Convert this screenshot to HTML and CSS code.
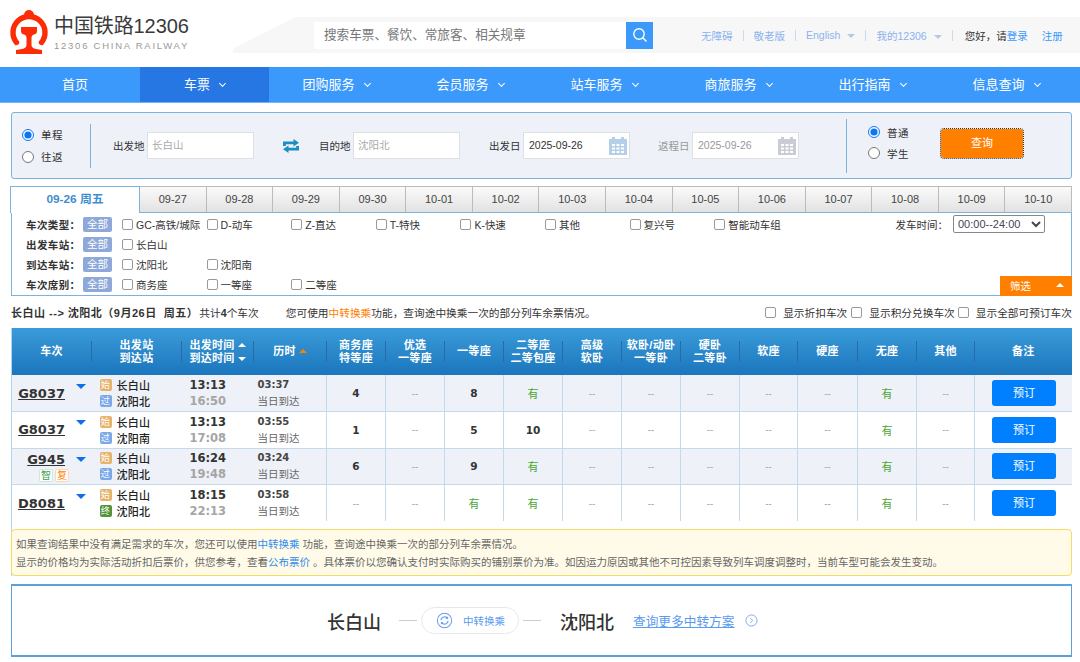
FILE: index.html
```html
<!DOCTYPE html>
<html lang="zh-CN">
<head>
    <meta charset="UTF-8">
    <meta name="viewport" content="width=device-width, initial-scale=1.0">
    <title>中国铁路12306</title>
    <link rel="stylesheet" href="styles.css">
</head>
<body>
    <header class="header">
        <div class="logo">
            <svg class="logo-mark" viewBox="0 0 40 46" width="40" height="46">
                <path d="M7.5 33.5A16 16 0 1 1 32.5 33.5" fill="none" stroke="#fb2c06" stroke-width="5.4" stroke-linecap="round"/>
                <path d="M15 6A5 5 0 0 1 25 6Z" fill="#fb2c06"/>
                <path d="M12 18H28V22Q28 25 25 25.5Q22.5 26 22.5 29V36Q22.5 39 27 40L33 41V45H7V41L13 40Q17.5 39 17.5 36V29Q17.5 26 15 25.5Q12 25 12 22Z" fill="#fb2c06"/>
            </svg>
            <div class="logo-text">
                <div class="logo-title">中国铁路12306</div>
                <div class="logo-sub">12306 CHINA RAILWAY</div>
            </div>
        </div>
        <div class="head-band">
            <div class="search">
                <div class="search-input">搜索车票、餐饮、常旅客、相关规章</div>
                <div class="search-btn">
                    <svg viewBox="0 0 16 16" width="16" height="16"><circle cx="7" cy="7" r="5.2" fill="none" stroke="#fff" stroke-width="1.4"/><path d="M10.8 10.8L14.5 14.5" stroke="#fff" stroke-width="1.5"/></svg>
                </div>
            </div>
            <div class="head-links">
                <a>无障碍</a><i class="sep"></i>
                <a>敬老版</a><i class="sep"></i>
                <a>English<b class="tri"></b></a><i class="sep"></i>
                <a>我的12306<b class="tri"></b></a><i class="sep"></i>
                <span class="hello">您好，请<a>登录</a></span>
                <a class="reg">注册</a>
            </div>
        </div>
    </header>

    <nav class="nav">
        <a class="nav-item nav-first">首页</a>
        <a class="nav-item active">车票<i class="chev"></i></a>
        <a class="nav-item">团购服务<i class="chev"></i></a>
        <a class="nav-item">会员服务<i class="chev"></i></a>
        <a class="nav-item">站车服务<i class="chev"></i></a>
        <a class="nav-item">商旅服务<i class="chev"></i></a>
        <a class="nav-item">出行指南<i class="chev"></i></a>
        <a class="nav-item">信息查询<i class="chev"></i></a>
    </nav>

    <main class="wrap">
        <section class="query">
            <div class="trip-type">
                <label class="radio"><input type="radio" name="trip" checked>单程</label>
                <label class="radio"><input type="radio" name="trip">往返</label>
            </div>
            <div class="field from-field">
                <span class="field-label">出发地</span>
                <div class="text-box">长白山</div>
            </div>
            <svg class="swap" viewBox="0 0 16 14" width="16" height="14">
                <path d="M0 7V2.5H10.5V0L16 3.8L10.5 7.5V5.2H2.8V7Z" fill="#1b8fc4"/>
                <path d="M16 7V11.5H5.5V14L0 10.2L5.5 6.5V8.8H13.2V7Z" fill="#1b8fc4"/>
            </svg>
            <div class="field to-field">
                <span class="field-label">目的地</span>
                <div class="text-box">沈阳北</div>
            </div>
            <div class="field date-field">
                <span class="field-label">出发日</span>
                <div class="text-box date-box">2025-09-26
                    <svg class="cal" viewBox="0 0 18 19" width="18" height="19"><path d="M0 3H3V1H6V3H12V1H15V3H18V19H0Z" fill="#b5cfe8"/><path d="M3 8h3v2H3zM7.5 8h3v2h-3zM12 8h3v2h-3zM3 11.5h3v2H3zM7.5 11.5h3v2h-3zM12 11.5h3v2h-3zM3 15h3v2H3zM7.5 15h3v2h-3zM12 15h3v2h-3z" fill="#fff"/></svg>
                </div>
            </div>
            <div class="field back-field">
                <span class="field-label muted">返程日</span>
                <div class="text-box date-box muted-box">2025-09-26
                    <svg class="cal" viewBox="0 0 18 19" width="18" height="19"><path d="M0 3H3V1H6V3H12V1H15V3H18V19H0Z" fill="#c9ccd4"/><path d="M3 8h3v2H3zM7.5 8h3v2h-3zM12 8h3v2h-3zM3 11.5h3v2H3zM7.5 11.5h3v2h-3zM12 11.5h3v2h-3zM3 15h3v2H3zM7.5 15h3v2h-3zM12 15h3v2h-3z" fill="#fff"/></svg>
                </div>
            </div>
            <div class="ticket-type">
                <label class="radio"><input type="radio" name="kind" checked>普通</label>
                <label class="radio"><input type="radio" name="kind">学生</label>
            </div>
            <div class="query-btn">查询</div>
        </section>

        <div class="tabs">
            <a class="tab on">09-26 周五</a>
            <a class="tab">09-27</a>
            <a class="tab">09-28</a>
            <a class="tab">09-29</a>
            <a class="tab">09-30</a>
            <a class="tab">10-01</a>
            <a class="tab">10-02</a>
            <a class="tab">10-03</a>
            <a class="tab">10-04</a>
            <a class="tab">10-05</a>
            <a class="tab">10-06</a>
            <a class="tab">10-07</a>
            <a class="tab">10-08</a>
            <a class="tab">10-09</a>
            <a class="tab">10-10</a>
        </div>

        <section class="filter">
            <div class="filter-row">
                <span class="filter-label">车次类型：</span><span class="all">全部</span>
                <label class="chk"><input type="checkbox">GC-高铁/城际</label>
                <label class="chk"><input type="checkbox">D-动车</label>
                <label class="chk"><input type="checkbox">Z-直达</label>
                <label class="chk"><input type="checkbox">T-特快</label>
                <label class="chk"><input type="checkbox">K-快速</label>
                <label class="chk"><input type="checkbox">其他</label>
                <label class="chk"><input type="checkbox">复兴号</label>
                <label class="chk"><input type="checkbox">智能动车组</label>
                <span class="time-label">发车时间：</span>
                <select class="time-select"><option>00:00--24:00</option></select>
            </div>
            <div class="filter-row">
                <span class="filter-label">出发车站：</span><span class="all">全部</span>
                <label class="chk"><input type="checkbox">长白山</label>
            </div>
            <div class="filter-row">
                <span class="filter-label">到达车站：</span><span class="all">全部</span>
                <label class="chk"><input type="checkbox">沈阳北</label>
                <label class="chk"><input type="checkbox">沈阳南</label>
            </div>
            <div class="filter-row">
                <span class="filter-label">车次席别：</span><span class="all">全部</span>
                <label class="chk"><input type="checkbox">商务座</label>
                <label class="chk"><input type="checkbox">一等座</label>
                <label class="chk"><input type="checkbox">二等座</label>
            </div>
            <div class="filter-tag">筛选<i></i></div>
        </section>

        <div class="summary">
            <strong class="route">长白山 --&gt; 沈阳北（9月26日&nbsp; 周五）</strong><span class="count">共计<strong>4</strong>个车次</span>
            <span class="tip">您可使用<em>中转换乘</em>功能，查询途中换乘一次的部分列车余票情况。</span>
            <div class="summary-opts">
                <label><input type="checkbox">显示折扣车次</label>
                <label><input type="checkbox">显示积分兑换车次</label>
                <label><input type="checkbox">显示全部可预订车次</label>
            </div>
        </div>

        <div class="result">
            <table class="trains">
                <colgroup>
                    <col><col><col><col>
                    <col><col><col><col>
                    <col><col><col><col>
                    <col><col><col><col>
                </colgroup>
                <thead>
                    <tr>
                        <th>车次</th>
                        <th>出发站<br>到达站</th>
                        <th>出发时间<i class="up"></i><br>到达时间<i class="down"></i></th>
                        <th>历时<i class="up orange"></i></th>
                        <th>商务座<br>特等座</th>
                        <th>优选<br>一等座</th>
                        <th>一等座</th>
                        <th>二等座<br>二等包座</th>
                        <th>高级<br>软卧</th>
                        <th>软卧/动卧<br>一等卧</th>
                        <th>硬卧<br>二等卧</th>
                        <th>软座</th>
                        <th>硬座</th>
                        <th>无座</th>
                        <th>其他</th>
                        <th>备注</th>
                    </tr>
                </thead>
                <tbody>
                    <tr>
                        <td class="train"><div class="train-line"><a class="no">G8037</a><i class="more"></i></div></td>
                        <td class="stations"><div><i class="st start">始</i>长白山</div><div><i class="st pass">过</i>沈阳北</div></td>
                        <td class="times"><b>13:13</b><b class="arr">16:50</b></td>
                        <td class="dur"><b>03:37</b><span>当日到达</span></td>
                        <td class="num">4</td><td class="none">--</td><td class="num">8</td><td class="yes">有</td>
                        <td class="none">--</td><td class="none">--</td><td class="none">--</td><td class="none">--</td>
                        <td class="none">--</td><td class="yes">有</td><td class="none">--</td>
                        <td class="act"><a class="book">预订</a></td>
                    </tr>
                    <tr>
                        <td class="train"><div class="train-line"><a class="no">G8037</a><i class="more"></i></div></td>
                        <td class="stations"><div><i class="st start">始</i>长白山</div><div><i class="st pass">过</i>沈阳南</div></td>
                        <td class="times"><b>13:13</b><b class="arr">17:08</b></td>
                        <td class="dur"><b>03:55</b><span>当日到达</span></td>
                        <td class="num">1</td><td class="none">--</td><td class="num">5</td><td class="num">10</td>
                        <td class="none">--</td><td class="none">--</td><td class="none">--</td><td class="none">--</td>
                        <td class="none">--</td><td class="yes">有</td><td class="none">--</td>
                        <td class="act"><a class="book">预订</a></td>
                    </tr>
                    <tr>
                        <td class="train marked">
                            <div class="train-line"><a class="no">G945</a><i class="more"></i></div>
                            <div class="marks"><i class="mark zhi">智</i><i class="mark fu">复</i></div>
                        </td>
                        <td class="stations"><div><i class="st start">始</i>长白山</div><div><i class="st pass">过</i>沈阳北</div></td>
                        <td class="times"><b>16:24</b><b class="arr">19:48</b></td>
                        <td class="dur"><b>03:24</b><span>当日到达</span></td>
                        <td class="num">6</td><td class="none">--</td><td class="num">9</td><td class="yes">有</td>
                        <td class="none">--</td><td class="none">--</td><td class="none">--</td><td class="none">--</td>
                        <td class="none">--</td><td class="yes">有</td><td class="none">--</td>
                        <td class="act"><a class="book">预订</a></td>
                    </tr>
                    <tr>
                        <td class="train"><div class="train-line"><a class="no">D8081</a><i class="more"></i></div></td>
                        <td class="stations"><div><i class="st start">始</i>长白山</div><div><i class="st end">终</i>沈阳北</div></td>
                        <td class="times"><b>18:15</b><b class="arr">22:13</b></td>
                        <td class="dur"><b>03:58</b><span>当日到达</span></td>
                        <td class="none">--</td><td class="none">--</td><td class="yes">有</td><td class="yes">有</td>
                        <td class="none">--</td><td class="none">--</td><td class="none">--</td><td class="none">--</td>
                        <td class="none">--</td><td class="yes">有</td><td class="none">--</td>
                        <td class="act"><a class="book">预订</a></td>
                    </tr>
                </tbody>
            </table>

            <div class="notice">
                <p>如果查询结果中没有满足需求的车次，您还可以使用<a>中转换乘</a> 功能，查询途中换乘一次的部分列车余票情况。</p>
                <p>显示的价格均为实际活动折扣后票价，供您参考，查看<a>公布票价</a> 。具体票价以您确认支付时实际购买的铺别票价为准。如因运力原因或其他不可控因素导致列车调度调整时，当前车型可能会发生变动。</p>
            </div>
        </div>

        <section class="transfer">
            <span class="city">长白山</span>
            <i class="dash first-dash"></i>
            <div class="pill">
                <svg viewBox="0 0 18 18" width="17" height="17"><circle cx="9" cy="9" r="7.6" fill="none" stroke="#6a9ff5" stroke-width="1.1"/><path d="M5.2 8.6A3.9 3.9 0 0 1 12 6.4M12.8 9.4A3.9 3.9 0 0 1 6 11.6" fill="none" stroke="#6a9ff5" stroke-width="1.3"/><path d="M12.8 4.6V7.3H10.1ZM5.2 13.4V10.7H7.9Z" fill="#6a9ff5"/></svg>
                <span>中转换乘</span>
            </div>
            <i class="dash"></i>
            <span class="city last-city">沈阳北</span>
            <a class="more-plans">查询更多中转方案</a>
            <svg class="go" viewBox="0 0 14 14" width="13" height="13"><circle cx="7" cy="7" r="6" fill="none" stroke="#7aa6ee" stroke-width="1"/><path d="M5.8 4.5L8.3 7L5.8 9.5" fill="none" stroke="#7aa6ee" stroke-width="1"/></svg>
        </section>
    </main>
</body>
</html>
```

FILE: styles.css
```css
* { box-sizing: border-box; margin: 0; padding: 0; }
body {
    font-family: "Liberation Sans", "Noto Sans CJK SC", sans-serif;
    font-size: 11px;
    color: #333;
    background: #fff;
    overflow: hidden;
    text-spacing-trim: space-all;
}
i, em { font-style: normal; }

/* top bar */
.header {
    display: flex;
    height: 67px;
}
.logo {
    display: flex;
    width: 233px;
    flex: none;
    padding: 9px 0 0 9px;
}
.logo-mark { flex: none; }
.logo-text { margin-left: 5px; padding-top: 5px; }
.logo-title {
    font-size: 20px;
    line-height: 25px;
    color: #3a3a3a;
    white-space: nowrap;
    letter-spacing: -0.1px;
}
.logo-sub {
    font-size: 9.5px;
    line-height: 13px;
    letter-spacing: 1.75px;
    color: #999;
    white-space: nowrap;
}
.head-band {
    flex: 1;
    display: flex;
    align-items: center;
    height: 36px;
    margin-top: 17px;
    padding-left: 81px;
    background: #f7f7f7;
    clip-path: polygon(0 100%, 0 88%, 62px 0, 100% 0, 100% 100%);
}
.search { display: flex; height: 27px; }
.search-input {
    width: 312px;
    background: #fff;
    font-size: 12.6px;
    line-height: 27px;
    padding-left: 10px;
    color: #777;
}
.search-btn {
    width: 27px;
    background: #3b99fc;
    display: flex;
    align-items: center;
    justify-content: center;
}
.head-links {
    display: flex;
    align-items: center;
    margin-left: 48px;
    font-size: 10.5px;
    color: #8bb3ef;
    white-space: nowrap;
}
.sep {
    width: 1px;
    height: 11px;
    background: #c9d9f0;
    margin: 0 10px;
}
.tri {
    display: inline-block;
    border: 4.5px solid transparent;
    border-top: 4.5px solid #b4c9e9;
    border-bottom: 0;
    margin-left: 7px;
    vertical-align: 1px;
}
.hello { margin-left: 2px; color: #333; }
.hello a { color: #3b99fc; }
.reg { margin-left: 14px; color: #3b99fc; }

/* main nav */
.nav {
    display: grid;
    grid-template-columns: 140px 129px repeat(6, 134px) 1fr;
    height: 36px;
    background: #3b99fc;
    border-bottom: 1px solid #6fb4fd;
}
.nav-item {
    text-align: center;
    color: #fff;
    font-size: 13px;
    line-height: 35px;
}
.nav-first { padding-left: 10px; }
.active { background: #2676e3; }
.chev {
    display: inline-block;
    width: 5px;
    height: 5px;
    border-right: 1px solid #fff;
    border-bottom: 1px solid #fff;
    transform: rotate(45deg);
    margin-left: 10px;
    vertical-align: 3px;
}

.wrap { padding: 9px 8px 0 10px; }

/* query panel */
.query {
    display: flex;
    align-items: center;
    height: 67px;
    margin-left: 1px;
    background: #eef1f8;
    border: 1px solid #7ab3dd;
    border-radius: 3px;
}
.radio {
    display: flex;
    align-items: center;
    height: 22px;
    font-size: 10.5px;
    color: #333;
    letter-spacing: 0.5px;
}
.radio input {
    width: 12px;
    height: 12px;
    margin: 0 7px 0 0;
    accent-color: #0a76f6;
}
.trip-type {
    width: 79px;
    height: 44px;
    flex: none;
    padding-left: 10px;
    border-right: 1px solid #7ab3dd;
}
.field { display: flex; align-items: center; flex: none; font-size: 10.5px; }
.field-label { width: 34px; white-space: nowrap; }
.muted { color: #999; }
.text-box {
    position: relative;
    width: 107px;
    height: 27px;
    background: #fff;
    border: 1px solid #dcdfe4;
    line-height: 25px;
    padding-left: 4px;
    color: #aaa;
}
.date-box { color: #333; padding-left: 5px; }
.muted-box { color: #999; }
.cal { position: absolute; right: 2px; top: 3px; }
.from-field { margin-left: 22px; }
.swap { margin-left: 29px; flex: none; }
.to-field { margin-left: 20px; }
.date-field { margin-left: 29px; }
.back-field { margin-left: 28px; }
.ticket-type {
    width: 93px;
    height: 54px;
    flex: none;
    margin-left: 47px;
    padding: 3px 0 0 21px;
    border-left: 1px solid #7ab3dd;
}
.ticket-type .radio { height: 21px; }
.query-btn {
    width: 84px;
    height: 31px;
    flex: none;
    margin: -5px 0 0 1px;
    border: 1px dotted #333;
    border-radius: 4px;
    background: #ff8000;
    background-clip: padding-box;
    color: #fff;
    text-align: center;
    line-height: 29px;
}

/* date tabs */
.tabs {
    display: grid;
    grid-template-columns: 130px repeat(14, 1fr);
    height: 27px;
    margin-top: 7px;
}
.tab {
    border: 1px solid #bbb;
    border-left: 0;
    border-bottom: 1px solid #7ab3dd;
    background: linear-gradient(#fafafa, #e2e2e2);
    text-align: center;
    line-height: 25px;
    color: #444;
}
.tab.on {
    background: #fff;
    border: 1px solid #7ab3dd;
    border-bottom: 0;
    color: #3c8ecf;
    font-weight: bold;
    font-size: 11.8px;
}

/* filter box */
.filter {
    position: relative;
    height: 83px;
    margin-left: 1px;
    padding: 1px 0 0 14px;
    border: 1px solid #7ab3dd;
    border-top: 0;
    font-size: 10.5px;
}
.filter-row {
    display: flex;
    align-items: center;
    height: 20px;
    white-space: nowrap;
}
.filter-label {
    width: 57px;
    font-weight: bold;
    color: #333;
    letter-spacing: 0.4px;
}
.all {
    width: 29px;
    height: 15px;
    margin-right: 10px;
    background: #8ea9d9;
    color: #fff;
    border-radius: 2px;
    text-align: center;
    line-height: 15px;
}
.chk {
    display: flex;
    align-items: center;
    width: 84.6px;
    flex: none;
}
.chk input, .summary-opts input {
    appearance: none;
    width: 11px;
    height: 11px;
    margin: 0 3px 0 0;
    flex: none;
    background: #fff;
    border: 1px solid #999;
    border-radius: 2px;
}
.time-label { margin-left: auto; }
.time-select {
    width: 92px;
    height: 18px;
    margin: 0 26px 0 5px;
    font-size: 11px;
    font-family: inherit;
    color: #445;
    background: #fff;
    border: 1px solid #888;
    border-radius: 2px;
}
.filter-tag {
    position: absolute;
    right: -1px;
    bottom: -1px;
    display: flex;
    align-items: center;
    justify-content: space-between;
    width: 72px;
    height: 20px;
    padding: 0 8px 2px 10px;
    background: #ff8000;
    color: #fff;
}
.filter-tag i {
    border: 4px solid transparent;
    border-bottom: 4px solid #fff;
    border-top: 0;
}

/* summary line */
.summary {
    display: flex;
    align-items: center;
    height: 32px;
    margin-left: 1px;
    color: #333;
    white-space: nowrap;
    font-size: 10.7px;
}
.route { font-size: 11px; letter-spacing: 0.5px; }
.count { margin-left: 1px; }
.tip { margin-left: 27px; }
.tip em { color: #ff8000; }
.summary-opts {
    display: flex;
    margin-left: auto;
}
.summary-opts label { display: flex; align-items: center; }
.summary-opts input { margin: 0 7px 0 3px; }
.summary-opts label:nth-child(2) input { margin-left: 4px; }

/* train table */
.result {
    margin-left: 1px;
    border-left: 1px solid #add5f2;
}
.trains {
    margin-left: -1px;
    width: calc(100% + 1px);
    table-layout: fixed;
    border-collapse: collapse;
}
.trains col:nth-child(1) { width: 80px; }
.trains col:nth-child(2) { width: 90px; }
.trains col:nth-child(3) { width: 72px; }
.trains col:nth-child(4) { width: 73px; }
.trains col:nth-child(n+5) { width: 59px; }
.trains col:nth-child(12), .trains col:nth-child(15) { width: 58px; }
.trains col:nth-child(13) { width: 60px; }
.trains col:nth-child(16) { width: auto; }
.trains th {
    height: 47px;
    background: linear-gradient(#3b9bd9, #1b76bd);
    color: #fff;
    font-weight: bold;
    font-size: 11px;
    letter-spacing: 0.3px;
    line-height: 13px;
    position: relative;
    white-space: nowrap;
}
.trains th + th::before {
    content: "";
    position: absolute;
    left: -1px;
    top: 13px;
    bottom: 13px;
    width: 1px;
    background: #2b6aa8;
}
.trains td {
    height: 36.5px;
    border-left: 1px solid #c4d9e9;
    border-bottom: 1px solid #c4d9e9;
    text-align: center;
    color: #333;
}
.trains td:nth-child(2), .trains td:nth-child(3), .trains td:nth-child(4) { border-left: 0; }
.trains td:first-child { border-left: 1px solid #add5f2; }
.trains tbody tr:nth-child(odd) td { background: #eef1f8; }
.trains tbody tr:last-child td { border-bottom: 0; }

.up, .down {
    display: inline-block;
    border: 4px solid transparent;
    margin-left: 3px;
}
.up { border-bottom: 4px solid #fff; border-top: 0; vertical-align: 2px; }
.down { border-top: 4px solid #fff; border-bottom: 0; vertical-align: 1px; }
.up.orange { border-bottom-color: #ff8000; }

.train { padding-top: 1px; }
.train-line { display: flex; align-items: flex-start; }
.no {
    width: 53px;
    text-align: right;
    font: bold 13px/16px "DejaVu Sans", sans-serif;
    color: #333;
    text-decoration: underline;
}
.more {
    border: 5px solid transparent;
    border-top: 5px solid #0f6fe8;
    border-bottom: 0;
    margin: -2px 0 0 11px;
}
.marked .more { margin-top: 5px; }
.marks {
    display: flex;
    gap: 2px;
    margin: 1px 0 0 27px;
}
.mark {
    width: 14px;
    height: 13px;
    font-size: 10px;
    line-height: 11px;
    border-radius: 2px;
    text-align: center;
}
.zhi { color: #36a24e; border: 1px solid #cfe9d5; background: #fff; }
.fu { color: #ff8000; border: 1px solid #fbd9b5; background: #fff; }

.stations { text-align: left !important; padding-left: 8px; font-weight: 500; }
.stations div {
    display: flex;
    align-items: center;
    height: 16px;
    color: #222;
    letter-spacing: 0.3px;
}
.st {
    width: 12px;
    height: 12px;
    margin-right: 5px;
    border-radius: 2px;
    color: #fff;
    font-size: 9px;
    font-weight: normal;
    line-height: 12px;
    text-align: center;
}
.start { background: #e7b26c; }
.pass { background: #7ba8e8; }
.end { background: #54933a; }

.times { text-align: left !important; padding-left: 8px; }
.times b {
    display: block;
    font: bold 11.5px/16px "DejaVu Sans", sans-serif;
    color: #333;
}
.times .arr { color: #a5a5a5; }
.dur { text-align: left !important; padding-left: 4px; }
.dur b {
    display: block;
    font: bold 10px/16px "DejaVu Sans", sans-serif;
    color: #444;
}
.dur span { display: block; font-size: 10.5px; line-height: 16px; color: #666; }
.num { font: bold 10.5px "DejaVu Sans", sans-serif; color: #333 !important; }
.none { color: #aaa !important; font-size: 10px; }
.yes { color: #4aa834 !important; }
.book {
    display: block;
    width: 64px;
    height: 26px;
    margin: 0 0 0 17px;
    background: #0080ff;
    border-radius: 3px;
    color: #fff;
    line-height: 26px;
    text-align: center;
}

/* notices */
.notice {
    height: 47px;
    margin: 8px 0 8px -1px;
    padding: 5px 4px 0 4px;
    background: #fffbe8;
    border: 1px solid #f4dd62;
    border-radius: 4px;
    font-size: 10.5px;
    line-height: 18px;
    color: #666;
    white-space: nowrap;
}
.notice a { color: #2f8cf0; }

/* transfer strip */
.transfer {
    display: flex;
    align-items: center;
    height: 73px;
    margin-left: 1px;
    padding-left: 315px;
    border: 1px solid #5aa2dc;
    border-top-width: 2px;
    border-bottom-width: 2px;
}
.city {
    font-family: "Liberation Serif", "Noto Sans CJK SC", serif;
    font-size: 18px;
    font-weight: 500;
    color: #333;
    white-space: nowrap;
}
.dash {
    width: 18px;
    height: 1px;
    background: #ccc;
    margin: 0 4px;
}
.first-dash { margin-left: 18px; }
.pill {
    display: flex;
    align-items: center;
    width: 98px;
    height: 27px;
    padding-left: 14px;
    gap: 10px;
    border: 1px solid #e6e8ec;
    border-radius: 14px;
    color: #5a9bf0;
    font-size: 10.5px;
}
.last-city { margin-left: 15px; }
.more-plans {
    margin-left: 19px;
    color: #5a9bf0;
    font-size: 12.7px;
    text-decoration: underline;
    white-space: nowrap;
}
.go { margin-left: 10px; }
```
